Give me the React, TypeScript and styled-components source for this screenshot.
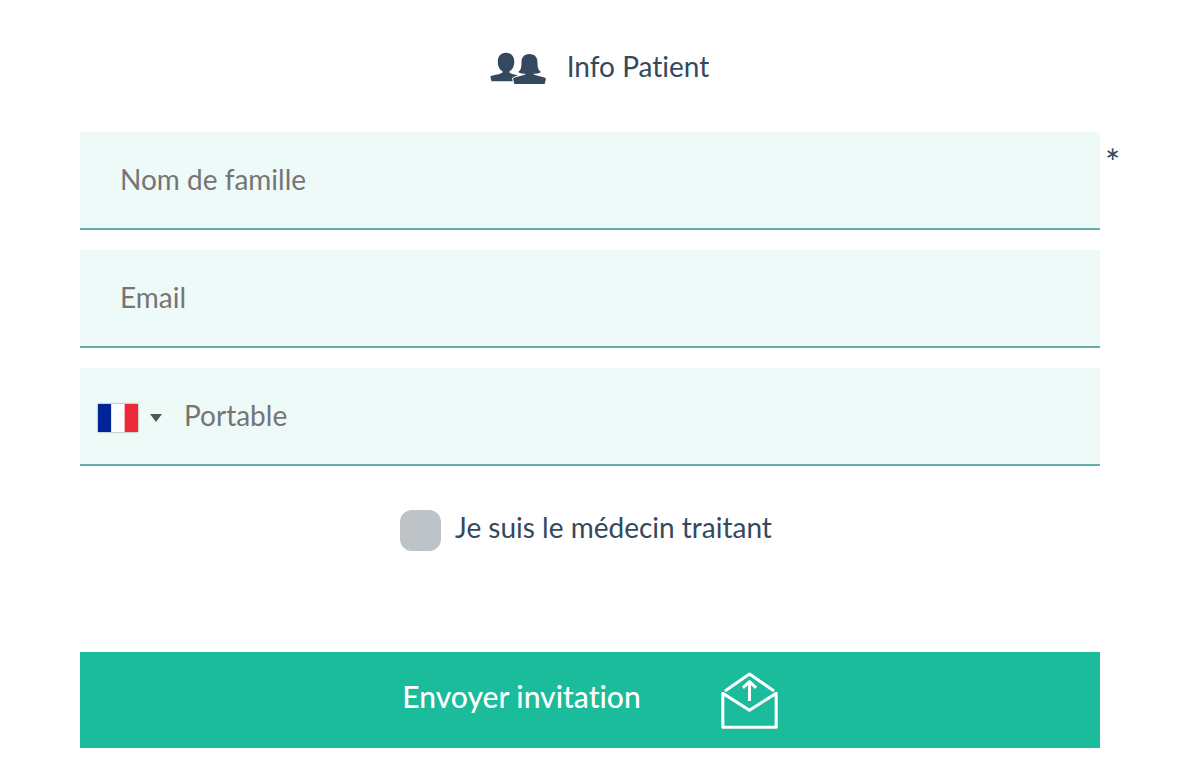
import React from "react";
import styled, { createGlobalStyle } from "styled-components";

const GlobalStyle = createGlobalStyle`
  *, *::before, *::after { box-sizing: border-box; }
  body {
    margin: 0;
    background: #fff;
    color: #34495e;
    font-family: Lato, "Liberation Sans", sans-serif;
    font-size: 28px;
    font-variant-ligatures: none;
    line-height: 40px;
  }
  button, input { font: inherit; font-variant-ligatures: none; color: inherit; }
`;

const Form = styled.form`
  padding: 46px 80px 32px;
`;

const Heading = styled.h1`
  display: flex;
  justify-content: center;
  gap: 21px;
  margin: 0 0 46px;
  padding-left: 19px;
  font-size: 28px;
  font-weight: 400;
`;

const PeopleIcon = styled.svg`
  width: 56px;
  height: 40px;
`;

const Fields = styled.div`
  display: flex;
  flex-direction: column;
  gap: 20px;
`;

const Field = styled.div`
  position: relative;
  display: flex;
  height: 98px;
  background: #edfaf7;
  border-bottom: 2px solid #62aeab;
`;

const Input = styled.input<{ $inset: number }>`
  flex: 1;
  min-width: 0;
  padding: 0 40px 2px ${(p) => p.$inset}px;
  border: 0;
  outline: 0;
  background: transparent;
  &::placeholder { color: #757575; opacity: 1; }
`;

const Required = styled.span`
  position: absolute;
  top: 10px;
  left: 100%;
  padding-left: 5px;
  font-size: 36px;
`;

const CountryButton = styled.button`
  display: flex;
  align-items: center;
  gap: 12px;
  padding: 4px 6px 0 18px;
  border: 0;
  background: transparent;
`;

const Flag = styled.svg`
  width: 40px;
  height: 28px;
  box-shadow: 0 0 2px #888;
`;

const Arrow = styled.svg`
  width: 12px;
  height: 8px;
`;

const CheckLabel = styled.label`
  display: flex;
  justify-content: center;
  align-items: flex-start;
  gap: 14px;
  margin: 41px 0 101px;
  padding-right: 8px;
`;

const Checkbox = styled.input`
  appearance: none;
  width: 41px;
  height: 41px;
  margin: 3px 0 0;
  border-radius: 12px;
  background: #bdc3c7;
  &:checked { background: #1abc9c; }
`;

const Submit = styled.button`
  display: flex;
  align-items: center;
  justify-content: center;
  gap: 80px;
  width: 100%;
  height: 96px;
  padding: 0;
  border: 0;
  background: #1abc9c;
  color: #fff;
  font-size: 30px;
  font-weight: 500;
`;

const SubmitText = styled.span`
  padding-bottom: 8px;
`;

const EnvelopeIcon = styled.svg`
  width: 57px;
  height: 57px;
`;

const FRENCH_FLAG = ["#002395", "#fff", "#ed2939"];

export default function App() {
  return (
    <>
      <GlobalStyle />
      <Form onSubmit={(e: React.FormEvent) => e.preventDefault()}>
        <Heading>
          <PeopleIcon viewBox="0 0 56 40" fill="#34495e" aria-hidden="true">
            <path d="M16 6.700C21.500 6.700 24.300 10.500 24.300 15.500C24.300 20 22.500 23.800 19.500 25.200V26.500C20.500 28 25 28.300 28 29.700V35.300H1.500L.3 30.500C4 28.500 11.500 28.200 12.500 26.500V25.200C9.500 23.800 7.800 20 7.800 15.500C7.800 10.500 10.500 6.700 16 6.700Z" />
            <path
              d="M39.500 8C45 8 47.500 11.500 47.500 16.500C47.500 21 48 24 51 26C49 27.500 46 27.800 43 27.800C45 30 52 30 56 32.500L54.700 38H24.300L23 32.500C27 30 34 30 36 27.800C33 27.800 30 27.500 28.300 26C31 24 31.500 21 31.500 16.500C31.500 11.500 34 8 39.500 8Z"
              stroke="#fff"
              strokeWidth="2"
              paintOrder="stroke"
            />
          </PeopleIcon>
          Info Patient
        </Heading>
        <Fields>
          <Field>
            <Input $inset={40} type="text" placeholder="Nom de famille" aria-label="Nom de famille" required />
            <Required>*</Required>
          </Field>
          <Field>
            <Input $inset={40} type="email" placeholder="Email" aria-label="Email" />
          </Field>
          <Field>
            <CountryButton type="button" aria-label="France" aria-haspopup="listbox">
              <Flag viewBox="0 0 3 2" preserveAspectRatio="none" aria-hidden="true">
                {FRENCH_FLAG.map((color, i) => (
                  <rect key={color} x={i} width="1" height="2" fill={color} />
                ))}
              </Flag>
              <Arrow viewBox="0 0 12 8" aria-hidden="true">
                <path d="M0 0H12L6 8Z" fill="#555" />
              </Arrow>
            </CountryButton>
            <Input $inset={16} type="tel" placeholder="Portable" aria-label="Portable" />
          </Field>
        </Fields>
        <CheckLabel>
          <Checkbox type="checkbox" />
          Je suis le médecin traitant
        </CheckLabel>
        <Submit type="submit">
          <SubmitText>Envoyer invitation</SubmitText>
          <EnvelopeIcon
            viewBox="0 0 56 56"
            fill="none"
            stroke="#fff"
            strokeWidth="3"
            strokeLinecap="round"
            strokeLinejoin="round"
            aria-hidden="true"
          >
            <path d="M1.800 21V54.200H54.200V21L28 37.500Z" />
            <path d="M5 18L28 1.900L51 18" />
            <path d="M28 28.500V10M21.500 15.500L28 9.500L34.500 15.500" strokeLinecap="butt" />
          </EnvelopeIcon>
        </Submit>
      </Form>
    </>
  );
}
